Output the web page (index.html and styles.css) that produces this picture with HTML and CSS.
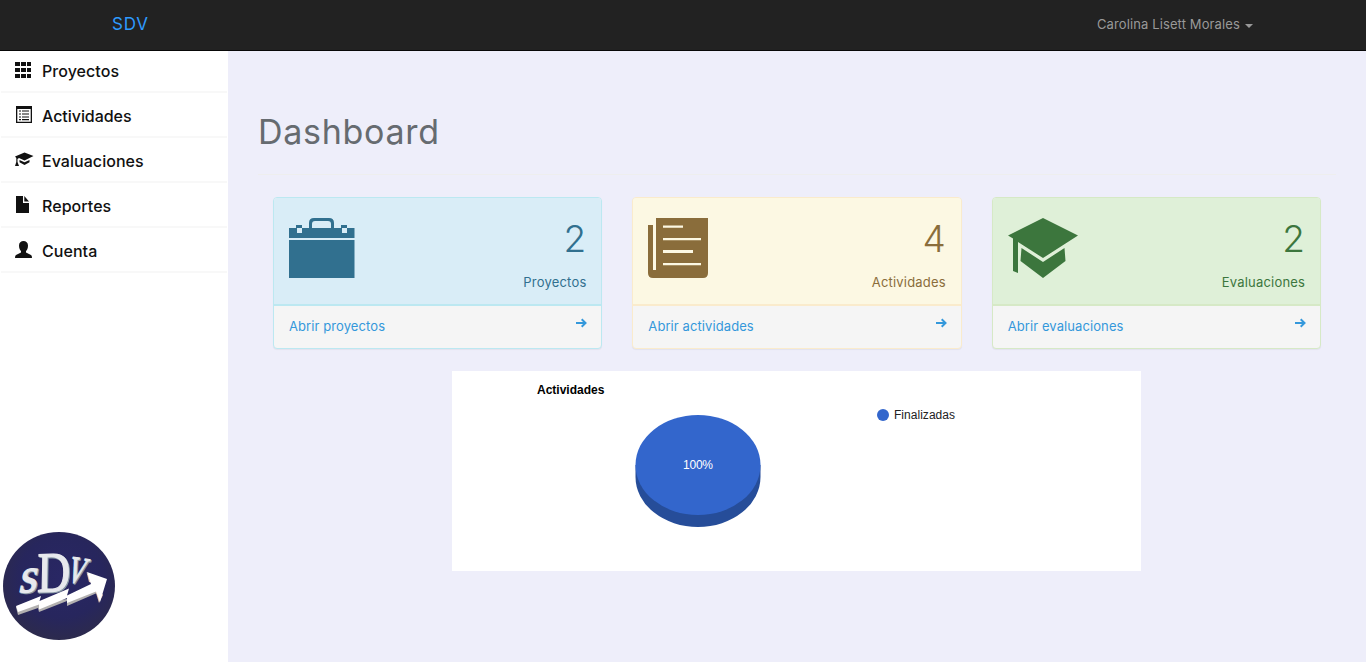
FILE: index.html
```html
<!DOCTYPE html>
<html lang="es">
<head>
<meta charset="utf-8">
<title>SDV</title>
<link rel="stylesheet" href="styles.css">
</head>
<body>
<header class="navbar">
  <a class="brand">SDV</a>
  <a class="user"><span>Carolina Lisett Morales</span><i class="caret"></i></a>
</header>
<div class="layout">
  <aside class="sidebar">
    <nav class="menu">
      <a class="item"><svg class="micon" viewBox="0 0 20 20"><path d="M0 1h5v4H0zM6 1h5v4H6zM12 1h4v4h-4zM0 7h5v4H0zM6 7h5v4H6zM12 7h4v4h-4zM0 13h5v4H0zM6 13h5v4H6zM12 13h4v4h-4z"/></svg><span class="m1">Proyectos</span></a>
      <a class="item"><svg class="micon" viewBox="0 0 20 20"><path fill-rule="evenodd" d="M1 0h16v17H1zM2.300 3v12.700h13.400V3z"/><path d="M4 4.400h2v1.200H4zM7 4.400h7v1.200H7zM4 7.400h2v1.200H4zM7 7.400h7v1.200H7zM4 10.400h2v1.200H4zM7 10.400h7v1.200H7zM4 13h2v1.200H4zM7 13h7v1.200H7z"/></svg><span class="m2">Actividades</span></a>
      <a class="item"><svg class="micon" viewBox="0 0 20 20"><path d="M9.500 1.500l9 3.500-9 4.500-5.500-2.600-1.500 1v3l1.500 4H0l1.300-4V7L0 5.500zM4.500 9l5 2.300L14.500 9v2.300L9.500 14l-5-2.700z"/></svg><span class="m3">Evaluaciones</span></a>
      <a class="item"><svg class="micon" viewBox="0 0 20 20"><path d="M1 0h7v7h6v10H1zM9.300 0l4.700 5.600H9.300z"/></svg><span class="m4">Reportes</span></a>
      <a class="item"><svg class="micon" viewBox="0 0 20 20"><path d="M8.500 0C11 0 13 1.500 13 4.500c0 3-1 4.500-2 5.500v1.500l5 2.500q1 .5 1 3H0q0-2.500 1-3l5-2.500V10C5 9 4 7.500 4 4.500 4 1.500 6 0 8.500 0z"/></svg><span class="m5">Cuenta</span></a>
    </nav>
    <svg class="logo" viewBox="0 0 114 110">
      <defs>
        <radialGradient id="disc" cx=".52" cy=".42" r=".58"><stop offset="0" stop-color="#292764"/><stop offset=".65" stop-color="#27265d"/><stop offset="1" stop-color="#2c2a4d"/></radialGradient>
      </defs>
      <ellipse cx="57" cy="55" rx="56" ry="54" fill="url(#disc)"/>
      <g class="mark">
        <g class="shade">
          <text transform="translate(17 62.500) rotate(-3) skewX(-14) scale(.95 1)" font-size="49">s</text>
          <text transform="translate(36 62) rotate(-2) skewX(-3) scale(.8 1)" font-size="57">D</text>
          <text transform="translate(64 51) rotate(9) skewX(-9) scale(.65 1)" font-size="38">V</text>
        </g>
        <g class="face">
          <text transform="translate(16 61.500) rotate(-3) skewX(-14) scale(.95 1)" font-size="49">s</text>
          <text transform="translate(35 61) rotate(-2) skewX(-3) scale(.8 1)" font-size="57">D</text>
          <text transform="translate(63 50) rotate(9) skewX(-9) scale(.65 1)" font-size="38">V</text>
        </g>
      </g>
      <path fill="#b3b1b0" d="M14 76l2 8 20-7 1 4 28-11v5l30-13v-5L65 68 37 72z"/>
      <path fill="#e8c9b5" d="M84.500 41l2.500 10 4 1 6 20 4-8z"/>
      <path fill="#fff" d="M14 75L39 65 37.500 70 67 57.500 65 64.500 89 53 85 41l20 7-7 23-4-10.500L65 72v-5L37 78.500v-5L16 81z"/>
    </svg>
  </aside>
  <main class="content">
    <h1 class="title"><span>Dashboard</span></h1>
    <div class="cards">
      <section class="card info">
        <div class="head">
          <svg class="cicon" viewBox="0 0 70 60"><path fill-rule="evenodd" d="M0 10h7V7h6v3h7V5q0-5 5-5h15q5 0 5 5v5h7V7h6v3h7.500v10H0zM23 10h19V6q0-3-3-3H26q-3 0-3 3zM8 10v5h5v-5zM53 10v5h5v-5zM0 22h65.500v38H0z"/></svg>
          <div class="count"><b>2</b><span>Proyectos</span></div>
        </div>
        <a class="foot"><span class="f1">Abrir proyectos</span><svg class="arrow" viewBox="0 0 11 10"><path d="M0 5h9M5.700 1.300L9.500 5 5.700 8.700"/></svg></a>
      </section>
      <section class="card warning">
        <div class="head">
          <svg class="cicon" viewBox="0 0 70 60"><path fill-rule="evenodd" d="M0 7h5v45h3V0h52v55q0 5-5 5H5q-5 0-5-5zM15 7.500v2.300h20V7.500zM15 20v2.300h38V20zM15 32v3h30v-3zM15 45v2.300h38V45z"/></svg>
          <div class="count"><b>4</b><span>Actividades</span></div>
        </div>
        <a class="foot"><span class="f2">Abrir actividades</span><svg class="arrow" viewBox="0 0 11 10"><path d="M0 5h9M5.700 1.300L9.500 5 5.700 8.700"/></svg></a>
      </section>
      <section class="card success">
        <div class="head">
          <svg class="cicon" viewBox="0 0 70 60"><path d="M35 0l35 17.500L35 40 10 24v31l-5-2V20.500L0 17.500zM13.500 30L35 44l21.500-14 1 13L35 60 12.500 43z"/></svg>
          <div class="count"><b>2</b><span>Evaluaciones</span></div>
        </div>
        <a class="foot"><span class="f3">Abrir evaluaciones</span><svg class="arrow" viewBox="0 0 11 10"><path d="M0 5h9M5.700 1.300L9.500 5 5.700 8.700"/></svg></a>
      </section>
    </div>
    <svg class="chart" viewBox="0 0 689 200">
      <text x="85" y="22.500" font-weight="bold">Actividades</text>
      <path fill="#264d99" d="M183.500 94v12a62.500 50 0 0 0 125 0V94z"/>
      <ellipse cx="246" cy="94" rx="62.500" ry="50" fill="#3366cc"/>
      <text x="246" y="98" text-anchor="middle" fill="#fff" textLength="30">100%</text>
      <circle cx="431" cy="44" r="6" fill="#3366cc"/>
      <text x="442" y="48" fill="#222" textLength="61">Finalizadas</text>
    </svg>
  </main>
</div>
</body>
</html>
```

FILE: styles.css
```css
* { box-sizing: border-box; }
body {
  margin: 0;
  height: 662px;
  overflow: hidden;
  background: #eeeefa;
  font: 13px/20px Inter, "Liberation Sans", sans-serif;
}
.navbar {
  display: flex;
  justify-content: space-between;
  align-items: center;
  height: 51px;
  padding: 0 113px 2px 112px;
  background: #222;
  border-bottom: 1px solid #080808;
}
.brand { color: #2e9afe; font-size: 17px; letter-spacing: .8px; }
.user { display: flex; align-items: center; gap: 5px; color: #999; letter-spacing: .12px; }
.caret { margin-top: 3px; border: 4px solid transparent; border-top-color: #999; border-bottom: 0; }
.layout { display: flex; height: 611px; }
.sidebar {
  display: flex;
  flex-direction: column;
  justify-content: space-between;
  width: 228px;
  background: #fff;
}
.menu { padding: 0 1px; }
.item {
  display: flex;
  align-items: center;
  gap: 7px;
  height: 45px;
  padding: 0 14px;
  border-bottom: 2px solid #f8f8f8;
  color: #111;
  font-size: 16px;
  font-weight: 500;
}
.item:first-child { height: 42px; }
.item:not(:first-child) { padding-top: 2px; }
.micon { width: 20px; height: 20px; fill: #111; }
.m1, .m3, .m4, .m5 { letter-spacing: .05px; }
.m2 { letter-spacing: -.05px; }
.logo { width: 114px; height: 110px; margin: 0 0 21px 2px; }
.mark { font-family: "Liberation Serif", serif; }
.shade { fill: #8798a5; stroke: #8798a5; stroke-width: 1.5; }
.face { fill: #e7e9ed; stroke: #e7e9ed; stroke-width: 1.3; }
.content { flex: 1; padding: 57px 30px 0; }
.title {
  height: 67px;
  margin: 0 0 22px;
  padding-top: 4px;
  border-bottom: 1px solid #eee;
  color: #666b70;
  font-size: 34px;
  font-weight: 400;
  line-height: 40px;
  letter-spacing: .7px;
}
.cards {
  display: grid;
  grid-template-columns: repeat(3, 1fr);
  gap: 30px;
  padding: 0 15px;
}
.card {
  height: 152px;
  border: 1px solid var(--line);
  border-radius: 4px;
  background: #f5f5f5;
  box-shadow: 0 1px 1px rgba(0, 0, 0, .05);
  overflow: hidden;
}
.head {
  display: flex;
  justify-content: space-between;
  height: 108px;
  padding: 20px 15px 0;
  border-bottom: 2px solid var(--line);
  background: var(--fill);
  color: var(--ink);
}
.cicon { width: 70px; height: 60px; fill: currentColor; }
.count { display: flex; flex-direction: column; align-items: flex-end; }
.count b { font-size: 37px; font-weight: 300; line-height: 42px; }
.count span { margin-top: 12px; letter-spacing: .2px; margin-right: -.2px; }
.info { --line: #bce8f1; --fill: #d9edf7; --ink: #31708f; }
.warning { --line: #faebcc; --fill: #fcf8e3; --ink: #8a6d3b; }
.success { --line: #d6e9c6; --fill: #dff0d8; --ink: #3c763d; }
.foot {
  display: flex;
  justify-content: space-between;
  padding: 10px 14px 0 15px;
  color: #3498db;
  letter-spacing: .09px;
}
.arrow { width: 11px; height: 10px; margin-top: 2px; fill: none; stroke: #3498db; stroke-width: 2; }
.chart {
  display: block;
  width: 689px;
  height: 200px;
  margin: 22px 0 0 194px;
  background: #fff;
  font: 12px "Liberation Sans", Arial, sans-serif;
}
```
